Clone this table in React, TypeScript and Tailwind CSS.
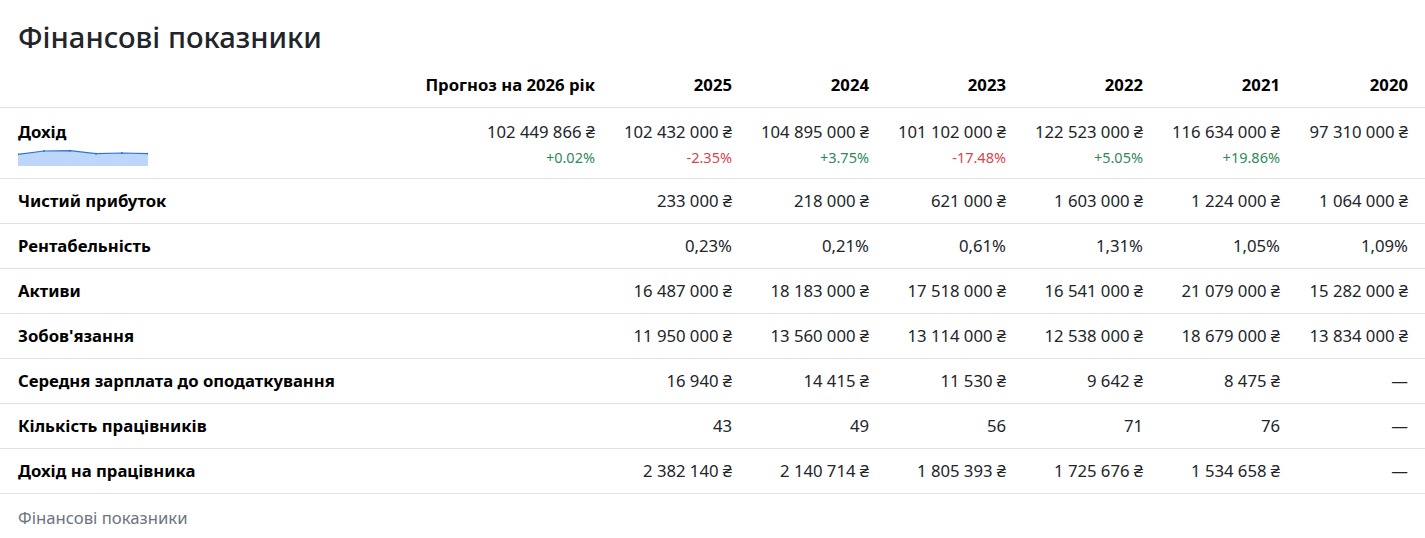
import React from 'react';

type Row = {
  label: string;
  forecast?: string;
  values: string[];
};

const years = ['2025', '2024', '2023', '2022', '2021', '2020'];

const forecastRevenue = '102 449 866 ₴';
const revenue = ['102 432 000 ₴', '104 895 000 ₴', '101 102 000 ₴', '122 523 000 ₴', '116 634 000 ₴', '97 310 000 ₴'];
// change vs previous year; forecast first, 2020 has none
const revenueChange: ({ text: string; up: boolean } | null)[] = [
  { text: '+0.02%', up: true },
  { text: '-2.35%', up: false },
  { text: '+3.75%', up: true },
  { text: '-17.48%', up: false },
  { text: '+5.05%', up: true },
  { text: '+19.86%', up: true },
  null,
];

const rows: Row[] = [
  { label: 'Чистий прибуток', values: ['233 000 ₴', '218 000 ₴', '621 000 ₴', '1 603 000 ₴', '1 224 000 ₴', '1 064 000 ₴'] },
  { label: 'Рентабельність', values: ['0,23%', '0,21%', '0,61%', '1,31%', '1,05%', '1,09%'] },
  { label: 'Активи', values: ['16 487 000 ₴', '18 183 000 ₴', '17 518 000 ₴', '16 541 000 ₴', '21 079 000 ₴', '15 282 000 ₴'] },
  { label: "Зобов'язання", values: ['11 950 000 ₴', '13 560 000 ₴', '13 114 000 ₴', '12 538 000 ₴', '18 679 000 ₴', '13 834 000 ₴'] },
  { label: 'Середня зарплата до оподаткування', values: ['16 940 ₴', '14 415 ₴', '11 530 ₴', '9 642 ₴', '8 475 ₴', '—'] },
  { label: 'Кількість працівників', values: ['43', '49', '56', '71', '76', '—'] },
  { label: 'Дохід на працівника', values: ['2 382 140 ₴', '2 140 714 ₴', '1 805 393 ₴', '1 725 676 ₴', '1 534 658 ₴', '—'] },
];

const Sparkline: React.FC = () => {
  const pts = [
    [0, 5.3],
    [26, 2],
    [52, 1.7],
    [78, 4.7],
    [104, 4],
    [130, 4.7],
  ];
  const line = pts.map(p => p.join(',')).join(' ');
  const area = `0,17 ${line} 130,17`;
  return (
    <svg width="130" height="17" viewBox="0 0 130 17" className="block mt-[5px]">
      <polygon points={area} fill="#bcd7fb" />
      <polyline points={line} fill="none" stroke="#2f74d8" strokeWidth="1.2" />
      {pts.map(([x, y], i) => (
        <circle key={i} cx={x} cy={y} r="1" fill="#2f74d8" />
      ))}
    </svg>
  );
};

const cellPad = (i: number) => (i === years.length - 1 ? 'pr-[17px]' : 'pr-2');

export default function App() {
  const revenueCells = [forecastRevenue, ...revenue];

  return (
    <div className="bg-white text-[#212529] text-[16.7px]" style={{ fontFamily: '"Noto Sans", "DejaVu Sans", sans-serif' }}>
      <h2 className="pl-[18px] pt-[20px] mb-2 text-[29.2px] leading-[1.2] font-medium">Фінансові показники</h2>
      <table className="w-full table-fixed border-collapse">
        <colgroup>
          <col />
          <col className="w-[191px]" />
          {years.map(y => (
            <col key={y} className="w-[137px]" />
          ))}
        </colgroup>
        <thead>
          <tr className="border-b border-[#dee2e6]">
            <th className="pl-[18px] py-[10px] leading-6"></th>
            <th className="pr-2 py-[10px] text-right font-bold text-black leading-6 whitespace-nowrap">Прогноз на 2026 рік</th>
            {years.map((y, i) => (
              <th key={y} className={`${cellPad(i)} py-[10px] text-right font-bold text-black leading-6`}>
                {y}
              </th>
            ))}
          </tr>
        </thead>
        <tbody>
          <tr className="border-b border-[#dee2e6] align-top">
            <td className="pl-[18px] pt-3 pb-3">
              <div className="font-bold text-black leading-6">Дохід</div>
              <Sparkline />
            </td>
            {revenueCells.map((v, i) => {
              const change = revenueChange[i];
              return (
                <td key={i} className={`${i === 0 ? 'pr-2' : cellPad(i - 1)} pt-3 text-right`}>
                  <div className="leading-6 whitespace-nowrap">{v}</div>
                  {change && (
                    <div className={`text-[14.5px] leading-5 mt-[3px] ${change.up ? 'text-[#2f8a5b]' : 'text-[#d6454f]'}`}>
                      {change.text}
                    </div>
                  )}
                </td>
              );
            })}
          </tr>
          {rows.map(row => (
            <tr key={row.label} className="border-b border-[#dee2e6]">
              <td className="pl-[18px] py-[10px] leading-6 font-bold text-black whitespace-nowrap">{row.label}</td>
              <td className="pr-2 py-[10px] leading-6 text-right">{row.forecast ?? ''}</td>
              {row.values.map((v, i) => (
                <td key={i} className={`${cellPad(i)} py-[10px] leading-6 text-right whitespace-nowrap`}>
                  {v}
                </td>
              ))}
            </tr>
          ))}
        </tbody>
        <caption className="caption-bottom text-left pl-[18px] pt-3 pb-2 leading-6 text-[#6c757d]">Фінансові показники</caption>
      </table>
    </div>
  );
}
